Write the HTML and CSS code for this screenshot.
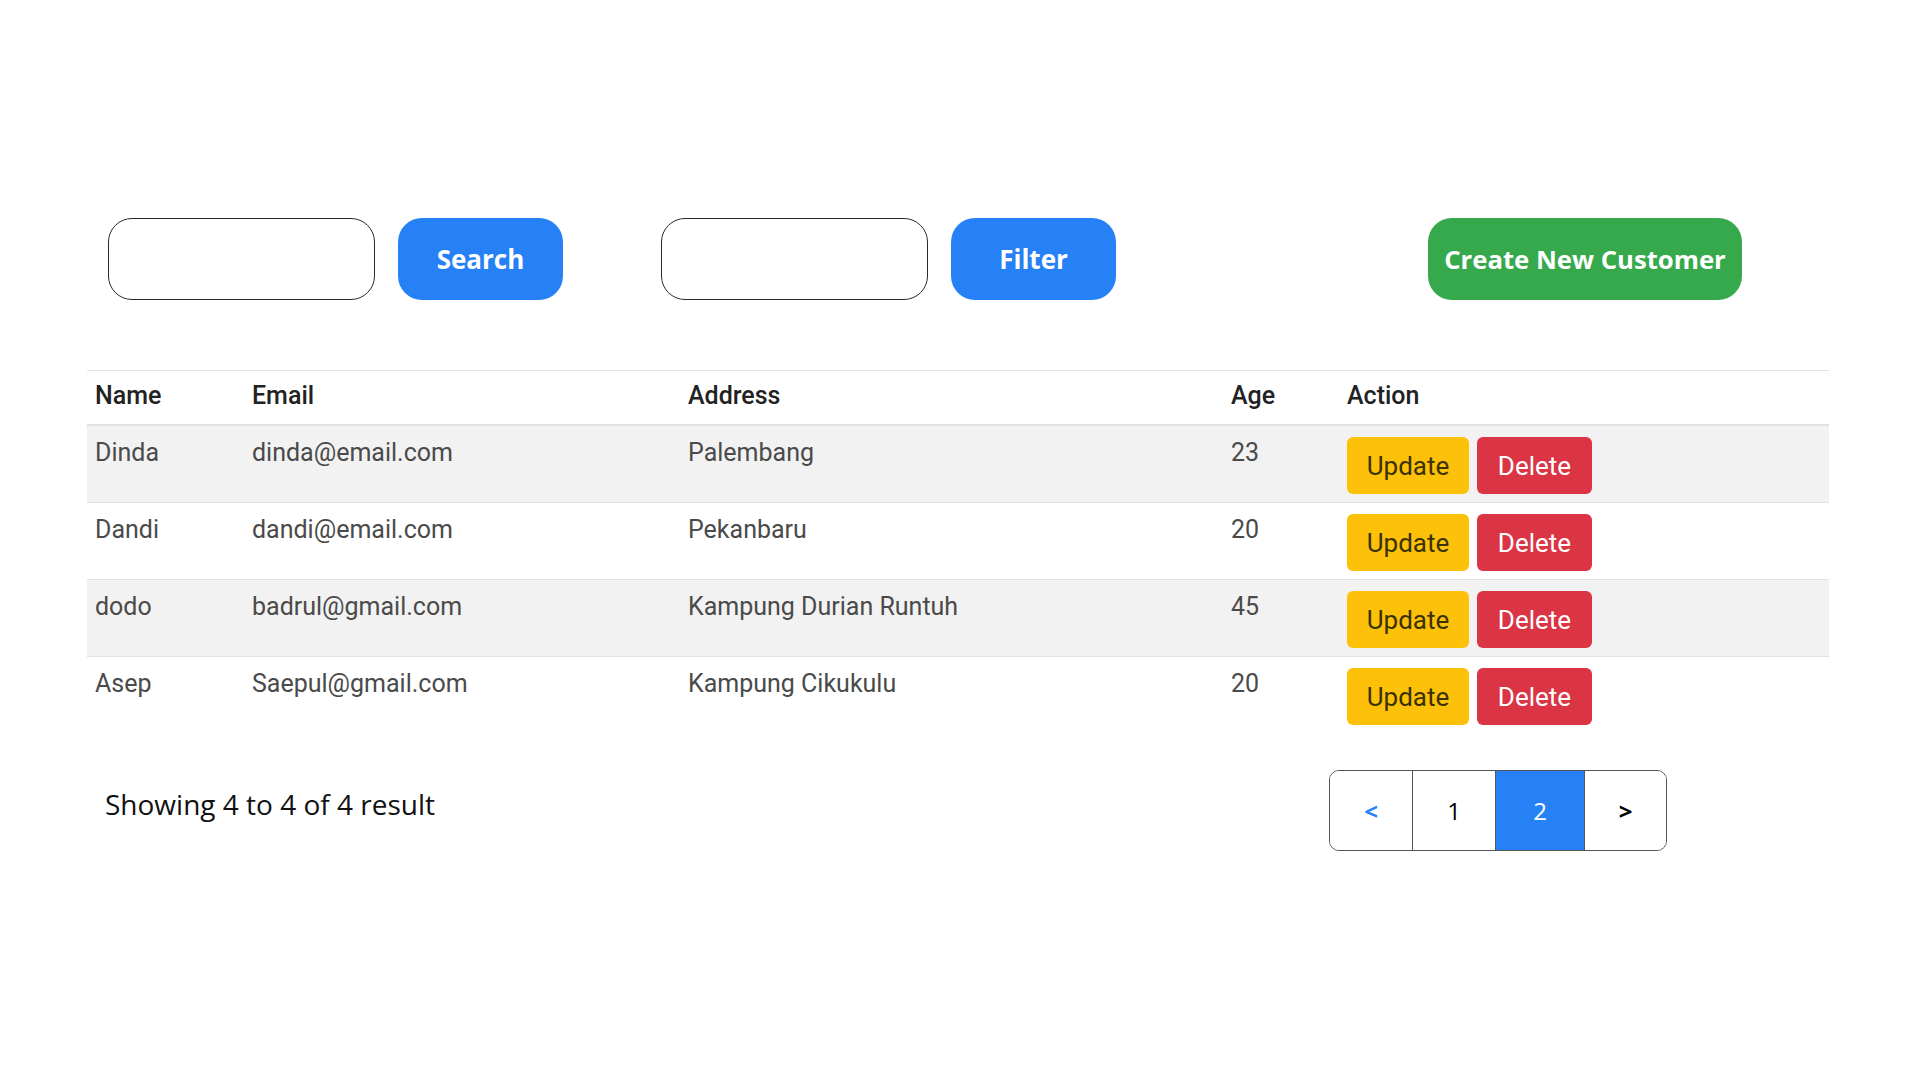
FILE: index.html
```html
<!DOCTYPE html>
<html lang="en">
<head>
<meta charset="utf-8">
<title>Customers</title>
<link rel="stylesheet" href="styles.css">
</head>
<body>
<main class="page">
  <div class="toolbar">
    <input class="field" type="text" aria-label="Search">
    <button class="btn-primary">Search</button>
    <input class="field field-filter" type="text" aria-label="Filter">
    <button class="btn-primary">Filter</button>
    <button class="btn-create">Create New Customer</button>
  </div>

  <table class="data">
    <thead>
      <tr>
        <th class="c-name">Name</th>
        <th class="c-email">Email</th>
        <th class="c-addr">Address</th>
        <th class="c-age">Age</th>
        <th class="c-act">Action</th>
      </tr>
    </thead>
    <tbody>
      <tr class="odd">
        <td>Dinda</td><td>dinda@email.com</td><td>Palembang</td><td>23</td>
        <td><div class="actions"><button class="btn-update">Update</button><button class="btn-delete">Delete</button></div></td>
      </tr>
      <tr>
        <td>Dandi</td><td>dandi@email.com</td><td>Pekanbaru</td><td>20</td>
        <td><div class="actions"><button class="btn-update">Update</button><button class="btn-delete">Delete</button></div></td>
      </tr>
      <tr class="odd">
        <td>dodo</td><td>badrul@gmail.com</td><td>Kampung Durian Runtuh</td><td>45</td>
        <td><div class="actions"><button class="btn-update">Update</button><button class="btn-delete">Delete</button></div></td>
      </tr>
      <tr class="last">
        <td>Asep</td><td>Saepul@gmail.com</td><td>Kampung Cikukulu</td><td>20</td>
        <td><div class="actions"><button class="btn-update">Update</button><button class="btn-delete">Delete</button></div></td>
      </tr>
    </tbody>
  </table>

  <div class="footer">
    <p class="summary">Showing 4 to 4 of 4 result</p>
    <nav class="pager">
      <button class="pg pg-prev">&lt;</button>
      <button class="pg pg-num">1</button>
      <button class="pg pg-active">2</button>
      <button class="pg pg-next">&gt;</button>
    </nav>
  </div>
</main>
</body>
</html>
```

FILE: styles.css
```css
* { box-sizing: border-box; }
html, body { margin: 0; padding: 0; background: #ffffff; }
body { font-family: "Open Sans", "Liberation Sans", sans-serif; color: #000; }

.page { width: 1920px; height: 1080px; }

.toolbar {
  display: flex;
  align-items: center;
  padding: 218px 178px 0 108px;
}
.field {
  width: 267px;
  height: 82px;
  border: 1.5px solid #2a2a2a;
  border-radius: 24px;
  background: #fff;
  outline: none;
  font: inherit;
}
.field-filter { margin-left: 98px; }
.btn-primary, .btn-create {
  height: 82px;
  border: none;
  border-radius: 24px;
  color: #fff;
  font-family: "Open Sans", sans-serif;
  font-weight: 700;
  font-size: 26px;
  margin-left: 23px;
}
.btn-primary { width: 165px; background: #2781f6; }
.btn-create { width: 314px; background: #36a94d; margin-left: auto; font-size: 25.7px; }

.data {
  margin: 70px 0 0 87px;
  width: 1742px;
  border-collapse: collapse;
  font-family: "Roboto", "Liberation Sans", sans-serif;
  font-size: 25px;
  color: #4a4a4a;
}
.data th, .data td {
  text-align: left;
  vertical-align: top;
  padding: 9px 8px 8px;
  line-height: 36px;
}
.data th {
  color: #222;
  font-weight: 500;
  padding: 7px 8px 10px;
}
.data thead tr { border-top: 1px solid #dfe1e5; border-bottom: 2px solid #dfe1e5; }
.data tbody tr { border-bottom: 1px solid #dfe1e5; }
.data tbody tr.last { border-bottom: none; }
.data tbody tr.odd { background: #f2f2f2; }
.c-name { width: 157px; }
.c-email { width: 436px; }
.c-addr { width: 543px; }
.c-age { width: 116px; }

.actions { display: flex; gap: 8px; padding-top: 2px; }
.btn-update, .btn-delete {
  height: 57px;
  border: none;
  border-radius: 6px;
  font-family: "Roboto", "Liberation Sans", sans-serif;
  font-size: 26px;
  padding: 0;
}
.btn-update { width: 122px; background: #fdc10a; color: #3a3200; }
.btn-delete { width: 115px; background: #db3545; color: #fff; }

.footer {
  display: flex;
  align-items: center;
  margin: 37px 0 0 87px;
  width: 1742px;
  padding-left: 18px;
}
.summary {
  margin: 0 0 14px 0;
  font-size: 28px;
  color: #111;
}
.pager {
  display: flex;
  margin-left: auto;
  margin-right: 162px;
  height: 81px;
  border: 1.5px solid #555;
  border-radius: 10px;
  overflow: hidden;
}
.pg {
  height: 100%;
  border: none;
  background: #fff;
  font-family: "Open Sans", sans-serif;
  font-size: 24px;
  padding: 0;
  color: #000;
}
.pg + .pg { border-left: 1.5px solid #555; }
.pg-prev { width: 82px; color: #2781f6; font-weight: 700; }
.pg-num { width: 83px; }
.pg-active { width: 89px; background: #2781f6; color: #fff; }
.pg-next { width: 82px; font-weight: 700; }
```
